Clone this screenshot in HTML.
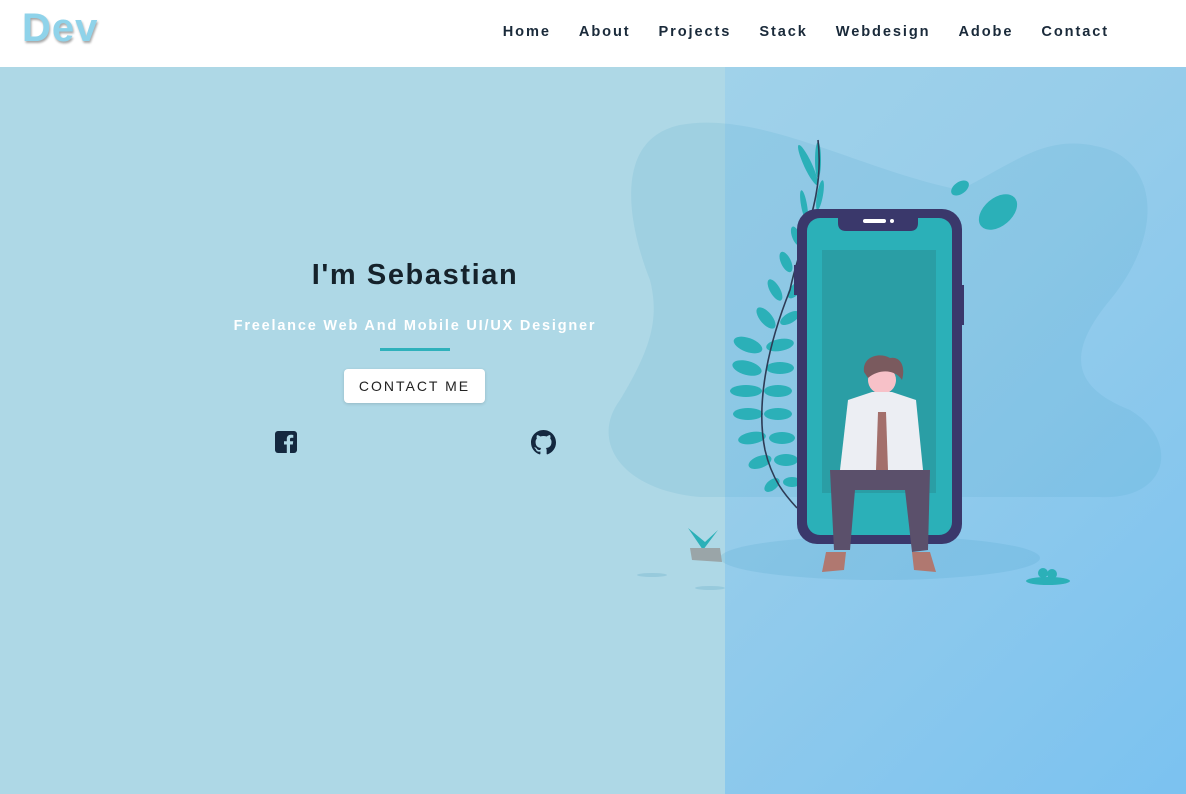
<!DOCTYPE html>
<html><head><meta charset="utf-8"><style>
*{margin:0;padding:0;box-sizing:border-box}
body{width:1186px;height:794px;overflow:hidden;font-family:"Liberation Sans",sans-serif;background:#fff;position:relative}
.nav{position:absolute;top:0;left:0;width:1186px;height:67px;background:#fff}
.logo{position:absolute;left:22px;top:6px;font-size:40px;font-weight:bold;color:#8fd3ea;text-shadow:1px 2px 2px rgba(0,0,0,.35);letter-spacing:1px}
.menu{position:absolute;top:24px;right:77px;display:flex}
.menu a{font-size:14.6px;font-weight:bold;color:#1a2a3a;letter-spacing:1.9px;margin-left:28px;text-decoration:none}
.hero{position:absolute;top:67px;left:0;width:1186px;height:727px;background:linear-gradient(135deg,#afdaea 0%,#97cdea 60%,#7bc2f0 100%)}
.left{position:absolute;top:67px;left:0;width:725px;height:727px;background:#aed8e6}
svg.ill{position:absolute;left:0;top:0}
h1{position:absolute;top:259px;left:0;width:830px;text-align:center;font-size:29px;letter-spacing:1.6px;color:#15222b;font-weight:bold}
.sub{position:absolute;top:318px;left:0;width:830px;text-align:center;font-size:14.5px;font-weight:bold;letter-spacing:1.8px;color:#fff}
.bar{position:absolute;top:348px;left:380px;width:70px;height:3px;background:#2fb1bb}
.btn{position:absolute;top:369px;left:344px;width:141px;height:34px;background:#fff;border-radius:4px;font-size:14px;letter-spacing:2px;color:#222;text-align:center;line-height:35px;box-shadow:0 1px 3px rgba(0,0,0,.15)}
</style></head><body>
<div class="hero"></div>
<div class="left"></div>
<svg class="ill" width="1186" height="794" viewBox="0 0 1186 794">
<path d="M680 125 C760 110 860 170 960 190 C1020 160 1050 130 1110 150 C1160 170 1160 240 1110 300 C1060 360 1080 390 1130 410 C1180 440 1170 500 1100 497 L700 497 C620 490 590 440 620 400 C650 350 660 320 650 280 C630 230 610 140 680 125Z" fill="rgba(70,160,195,0.14)"/>
<ellipse cx="880" cy="558" rx="160" ry="22" fill="rgba(70,160,200,0.18)"/>
<g fill="#2bb0b8">
<ellipse cx="748" cy="345" rx="15" ry="7" transform="rotate(20 748 345)"/><ellipse cx="780" cy="345" rx="14" ry="6" transform="rotate(-10 780 345)"/>
<ellipse cx="747" cy="368" rx="15" ry="7" transform="rotate(15 747 368)"/><ellipse cx="780" cy="368" rx="14" ry="6"/>
<ellipse cx="746" cy="391" rx="16" ry="6"/><ellipse cx="778" cy="391" rx="14" ry="6"/>
<ellipse cx="748" cy="414" rx="15" ry="6"/><ellipse cx="778" cy="414" rx="14" ry="6"/>
<ellipse cx="752" cy="438" rx="14" ry="6" transform="rotate(-10 752 438)"/><ellipse cx="782" cy="438" rx="13" ry="6"/>
<ellipse cx="760" cy="462" rx="12" ry="6" transform="rotate(-20 760 462)"/><ellipse cx="786" cy="460" rx="12" ry="6"/>
<ellipse cx="772" cy="485" rx="9" ry="5" transform="rotate(-40 772 485)"/><ellipse cx="792" cy="482" rx="9" ry="5"/>
<ellipse cx="766" cy="318" rx="13" ry="6" transform="rotate(50 766 318)"/><ellipse cx="790" cy="318" rx="11" ry="5" transform="rotate(-30 790 318)"/>
<ellipse cx="775" cy="290" rx="12" ry="5" transform="rotate(60 775 290)"/><ellipse cx="795" cy="290" rx="10" ry="5" transform="rotate(-50 795 290)"/>
<ellipse cx="786" cy="262" rx="11" ry="5" transform="rotate(65 786 262)"/>
<ellipse cx="796" cy="236" rx="10" ry="4" transform="rotate(70 796 236)"/>
<ellipse cx="808" cy="165" rx="4" ry="22" transform="rotate(-25 808 165)"/><ellipse cx="818" cy="160" rx="3" ry="18"/><ellipse cx="820" cy="195" rx="3" ry="15" transform="rotate(10 820 195)"/><ellipse cx="804" cy="205" rx="3" ry="15" transform="rotate(-10 804 205)"/>
<ellipse cx="998" cy="212" rx="22" ry="14" transform="rotate(-40 998 212)"/><ellipse cx="960" cy="188" rx="10" ry="6" transform="rotate(-35 960 188)"/>
<ellipse cx="1048" cy="581" rx="22" ry="4"/><circle cx="1043" cy="573" r="5"/><circle cx="1052" cy="574" r="5"/>
<path d="M688 528 L703 550 L718 530 L705 542Z"/>
</g>
<path d="M818 140 C825 200 800 240 790 290 C770 340 755 400 765 450 C772 480 785 495 797 508" stroke="#2d3b55" stroke-width="1.6" fill="none"/>
<path d="M690 548 L720 548 L722 562 L692 560Z" fill="#9aa5a8"/>
<rect x="797" y="209" width="165" height="335" rx="20" fill="#3a386b"/>
<rect x="794" y="265" width="4" height="30" fill="#3a386b"/><rect x="960" y="285" width="4" height="40" fill="#3a386b"/>
<rect x="807" y="218" width="145" height="317" rx="13" fill="#2bb0b8"/>
<path d="M838 218 H918 V223 Q918 231 910 231 H846 Q838 231 838 223Z" fill="#3a386b"/>
<rect x="863" y="219" width="23" height="4" rx="2" fill="#fff"/><circle cx="892" cy="221" r="2" fill="#fff"/>
<rect x="822" y="250" width="114" height="243" fill="#2a9ea5"/>
<circle cx="882" cy="380" r="14" fill="#f7c1c8"/>
<path d="M864 372 C862 356 880 352 890 358 C900 356 906 366 902 380 C896 370 880 368 868 378Z" fill="#7a5a5e"/>
<path d="M848 400 L872 392 L892 392 L916 400 L923 470 L905 478 L860 478 L840 470Z" fill="#eceef3"/>
<path d="M878 412 L886 412 L888 470 L882 474 L876 470Z" fill="#a36f6b"/>
<path d="M830 470 L930 470 L928 550 L912 552 L905 490 L855 490 L850 550 L834 550Z" fill="#5b506b"/>
<path d="M826 552 L846 552 L844 570 L822 572Z" fill="#b07870"/><path d="M912 552 L930 552 L936 572 L914 570Z" fill="#b07870"/>
<ellipse cx="652" cy="575" rx="15" ry="2" fill="rgba(100,170,200,.3)"/><ellipse cx="710" cy="588" rx="15" ry="2" fill="rgba(100,170,200,.3)"/>
</svg>
<div class="nav"><div class="logo">Dev</div>
<div class="menu"><a>Home</a><a>About</a><a>Projects</a><a>Stack</a><a>Webdesign</a><a>Adobe</a><a>Contact</a></div></div>
<h1>I'm Sebastian</h1>
<div class="sub">Freelance Web And Mobile UI/UX Designer</div>
<div class="bar"></div>
<div class="btn">CONTACT ME</div>
<svg style="position:absolute;left:275px;top:431px" width="22" height="22" viewBox="0 0 22 22"><rect width="22" height="22" rx="3" fill="#14283f"/><path d="M15 22 V13.5 H17.8 L18.2 10.3 H15 V8.3 C15 7.4 15.3 6.8 16.6 6.8 H18.3 V4 C17.9 3.9 17 3.8 15.9 3.8 C13.5 3.8 11.8 5.3 11.8 8 V10.3 H9 V13.5 H11.8 V22Z" fill="#aed8e6"/></svg>
<svg style="position:absolute;left:531px;top:430px" width="25" height="25" viewBox="0 0 16 16"><path fill="#14283f" d="M8 0C3.58 0 0 3.580 0 8c0 3.54 2.29 6.53 5.47 7.590.4.07.55-.17.55-.38 0-.19-.01-.82-.01-1.490-2.01.37-2.530-.49-2.690-.94-.09-.23-.48-.94-.82-1.130-.28-.15-.68-.52-.01-.53.63-.01 1.080.58 1.230.82.72 1.210 1.870.87 2.330.66.07-.52.28-.87.51-1.070-1.780-.2-3.640-.89-3.640-3.950 0-.87.31-1.590.82-2.150-.08-.2-.36-1.020.08-2.120 0 0 .67-.21 2.200.82.64-.18 1.320-.27 2-.27.68 0 1.360.09 2 .27 1.530-1.040 2.200-.82 2.200-.82.44 1.100.16 1.920.08 2.120.51.56.82 1.270.82 2.150 0 3.070-1.870 3.750-3.650 3.950.29.25.54.73.54 1.480 0 1.070-.01 1.930-.01 2.200 0 .21.15.46.55.38A8.013 8.013 0 0016 8c0-4.420-3.580-8-8-8z"/></svg>
</body></html>
